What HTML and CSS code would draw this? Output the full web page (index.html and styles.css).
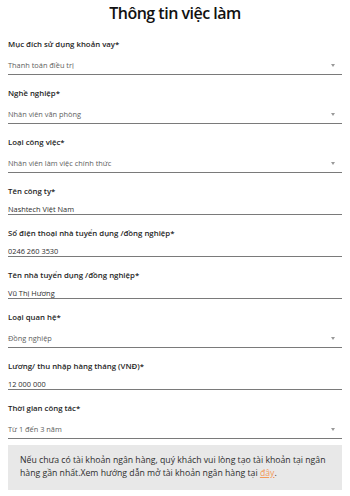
FILE: index.html
```html
<!DOCTYPE html>
<html lang="vi">
<head>
<meta charset="utf-8">
<title>Thông tin việc làm</title>
<link rel="stylesheet" href="styles.css">
</head>
<body>
<main class="page">
  <h1 class="title">Thông tin việc làm</h1>
  <div class="fields">
    <div class="field">
      <div class="label">Mục đích sử dụng khoản vay*</div>
      <div class="select"><span class="val">Thanh toán điều trị</span><span class="caret"></span></div>
    </div>
    <div class="field">
      <div class="label">Nghề nghiệp*</div>
      <div class="select"><span class="val">Nhân viên văn phòng</span><span class="caret"></span></div>
    </div>
    <div class="field">
      <div class="label">Loại công việc*</div>
      <div class="select"><span class="val">Nhân viên làm việc chính thức</span><span class="caret"></span></div>
    </div>
    <div class="field">
      <div class="label">Tên công ty*</div>
      <div class="input">Nashtech Việt Nam</div>
    </div>
    <div class="field">
      <div class="label">Số điện thoại nhà tuyển dụng /đồng nghiệp*</div>
      <div class="input">0246 260 3530</div>
    </div>
    <div class="field">
      <div class="label">Tên nhà tuyển dụng /đồng nghiệp*</div>
      <div class="input">Vũ Thị Hương</div>
    </div>
    <div class="field">
      <div class="label">Loại quan hệ*</div>
      <div class="select"><span class="val">Đồng nghiệp</span><span class="caret"></span></div>
    </div>
    <div class="field">
      <div class="label">Lương/ thu nhập hàng tháng (VNĐ)*</div>
      <div class="input">12 000 000</div>
    </div>
    <div class="field">
      <div class="label">Thời gian công tác*</div>
      <div class="select"><span class="val">Từ 1 đến 3 năm</span><span class="caret"></span></div>
    </div>
  </div>
  <p class="note">Nếu chưa có tài khoản ngân hàng, quý khách vui lòng tạo tài khoản tại ngân hàng gần nhất.Xem hướng dẫn mở tài khoản ngân hàng tại <a class="link" href="#">đây</a>.</p>
</main>
</body>
</html>
```
FILE: styles.css
```css
html, body {
  margin: 0;
  padding: 0;
  background: #ffffff;
}
body {
  font-family: "Open Sans", "Noto Sans", sans-serif;
  color: #222;
}
.page {
  padding: 0 8px;
}
.title {
  margin: 0;
  padding-top: 1px;
  font-size: 16px;
  line-height: 24px;
  font-weight: 600;
  letter-spacing: -0.5px;
  text-align: center;
  color: #111;
}
.fields {
  display: flex;
  flex-direction: column;
  gap: 12px;
  margin-top: 13px;
}
.field {
  display: flex;
  flex-direction: column;
}
.label {
  font-size: 7.8px;
  line-height: 12px;
  font-weight: 600;
  color: #1e1e1e;
  margin-bottom: 5px;
}
.select {
  display: flex;
  align-items: center;
  justify-content: space-between;
  padding: 4px 0 3px;
  border-bottom: 1px solid #7a7a7a;
}
.val {
  font-size: 7.4px;
  line-height: 12px;
  color: #5e5e5e;
}
.caret {
  width: 0;
  height: 0;
  border-left: 2.5px solid transparent;
  border-right: 2.5px solid transparent;
  border-top: 3px solid #999;
  margin-right: 7px;
}
.input {
  font-size: 7.4px;
  line-height: 9px;
  padding-top: 3px;
  color: #2e2e2e;
  border-bottom: 1px solid #7a7a7a;
}
.note {
  margin: 6px 0 0;
  background: #e8e8e8;
  padding: 9px 12px 10px;
  font-size: 8.7px;
  line-height: 13px;
  color: #2e2e2e;
}
.link {
  color: #f39a5a;
  text-decoration: underline;
}
```
